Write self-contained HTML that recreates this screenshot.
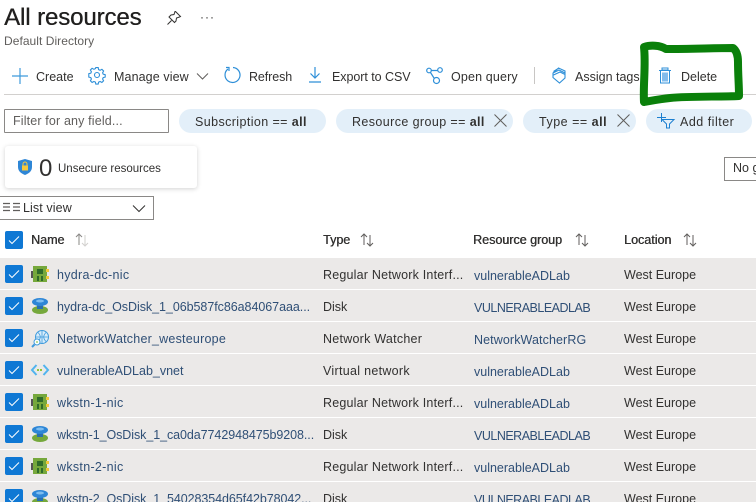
<!DOCTYPE html>
<html><head><meta charset="utf-8"><style>
html,body{margin:0;padding:0;background:#fff}
#p{position:relative;width:756px;height:502px;overflow:hidden;background:#fff;font-family:"Liberation Sans",sans-serif;font-size:12.5px;color:#323130}
.t{position:absolute;white-space:nowrap;line-height:16px}
.h{text-shadow:.4px 0 #323130}
.r{position:absolute;left:0;width:756px;height:31px;background:#ebe9e8}
.c{position:absolute;left:5px;width:18px;height:18px;background:#0f78d4;border-radius:2px}
.c svg{position:absolute;left:0;top:0}
.l{color:#2f4f76}
.up{letter-spacing:-.5px}
.nic{letter-spacing:.2px}
.pill{position:absolute;height:24px;top:109px;background:#e3eff9;border-radius:12px}
svg.a{position:absolute;overflow:visible}
b{font-weight:700}
</style></head><body><div id="p">

<div class="t h" style="left:4px;top:4px;font-size:24px;line-height:28px;color:#201f1e;letter-spacing:-.1px">All resources</div>
<svg class="a" style="left:166px;top:10px" width="16" height="16" viewBox="0 0 16 16" fill="none" stroke="#323130" stroke-width="1"><path d="M9.500 1.500l5 5-1 .5-3 1-.5 3-1.500 1.500-5.500-5.500 2-2 3-.5 1-3zM5.500 10.500l-4 4"/></svg>
<div class="t" style="left:200px;top:9px;font-size:12px;color:#323130;letter-spacing:1px">···</div>
<div class="t" style="left:4px;top:33px;font-size:12px;color:#605e5c;letter-spacing:.05px">Default Directory</div>

<svg class="a" style="left:12px;top:68px" width="16" height="16" fill="none" stroke="#3f9bdc" stroke-width="1.200"><path d="M8 0v16M0 8h16"/></svg>
<div class="t" style="left:36px;top:69px">Create</div>
<svg class="a" style="left:89px;top:67px" width="16" height="16" viewBox="0 0 16 16" fill="none" stroke="#2e8fd8" stroke-width="1.100"><circle cx="8" cy="8" r="2.500"/><path d="M6.800.6h2.400l.4 2 1.500.7 1.800-1 1.700 1.700-1 1.800.6 1.400 2 .5v2.400l-2 .5-.6 1.400 1 1.800-1.700 1.700-1.800-1-1.500.6-.4 2H6.800l-.4-2-1.500-.6-1.800 1-1.700-1.700 1-1.800-.6-1.400-2-.5V6.700l2-.5.600-1.400-1-1.800 1.700-1.700 1.800 1 1.500-.7z"/></svg>
<div class="t" style="left:114px;top:69px;letter-spacing:.1px">Manage view</div>
<svg class="a" style="left:196px;top:73px" width="13" height="7" fill="none" stroke="#605e5c"><path d="M1 .5l5.500 5.500L12 .5"/></svg>
<svg class="a" style="left:224px;top:66px" width="18" height="18" viewBox="0 0 18 18" fill="none" stroke="#2e8fd8" stroke-width="1.200"><path d="M4 3a7.500 7.500 0 1 0 5-1.500M2 1.500h3V5"/></svg>
<div class="t" style="left:249px;top:69px;letter-spacing:-.1px">Refresh</div>
<svg class="a" style="left:308px;top:67px" width="14" height="16" fill="none" stroke="#2e8fd8" stroke-width="1.200"><path d="M7 0v11M2.500 6.500L7 11l4.500-4.500M1 15h12"/></svg>
<div class="t" style="left:332px;top:69px;letter-spacing:-.05px">Export to CSV</div>
<svg class="a" style="left:426px;top:67px" width="17" height="17" fill="none" stroke="#2e8fd8" stroke-width="1.200"><circle cx="3" cy="3.500" r="2.300"/><circle cx="14" cy="3" r="2.300"/><circle cx="10.500" cy="13.500" r="3"/><path d="M5.300 3.500h6.500M4.500 5.500l3.800 6"/></svg>
<div class="t" style="left:451px;top:69px;letter-spacing:.15px">Open query</div>
<div style="position:absolute;left:534px;top:67px;width:1px;height:17px;background:#c8c6c4"></div>
<svg class="a" style="left:552px;top:67px" width="15" height="17" fill="none" stroke="#2e8fd8" stroke-width="1.100"><path d="M1 6l5.500-5L13 4v7l-5.500 5L1 10.500zM1.500 4.500L7 1M1 6l6-3 6 3M1.500 8L8 5l5 2.500"/></svg>
<div class="t" style="left:575px;top:69px;width:65px;overflow:hidden">Assign tags</div>
<svg class="a" style="left:658px;top:67px" width="14" height="17"><path d="M4 1h6v2H4z M1 3.500h12" fill="none" stroke="#2e8fd8"/><rect x="2.500" y="3.500" width="9" height="12.500" fill="#fff" stroke="#2e8fd8"/><rect x="4" y="5.500" width="6" height="9" fill="#82bcec"/></svg>
<div class="t" style="left:681px;top:69px">Delete</div>
<div style="position:absolute;left:4px;top:94px;width:752px;height:1px;background:#d2d0ce"></div>

<div style="position:absolute;left:4px;top:109px;width:163px;height:22px;border:1px solid #8a8886;border-radius:1px"></div>
<div class="t" style="left:13px;top:113px;color:#605e5c;letter-spacing:.15px">Filter for any field...</div>
<div class="pill" style="left:179px;width:147px"></div>
<div class="t" style="left:195px;top:114px;letter-spacing:.4px">Subscription == <b>all</b></div>
<div class="pill" style="left:336px;width:177px"></div>
<div class="t" style="left:352px;top:114px;letter-spacing:.4px">Resource group == <b>all</b></div>
<svg class="a" style="left:494px;top:114px" width="13" height="13" stroke="#605e5c"><path d="M.5.500l12 12M12.500.500l-12 12"/></svg>
<div class="pill" style="left:523px;width:113px"></div>
<div class="t" style="left:539px;top:114px;letter-spacing:.5px">Type == <b>all</b></div>
<svg class="a" style="left:617px;top:114px" width="13" height="13" stroke="#605e5c"><path d="M.5.500l12 12M12.500.500l-12 12"/></svg>
<div class="pill" style="left:646px;width:106px"></div>
<svg class="a" style="left:657px;top:113px" width="18" height="16" fill="none" stroke="#1c7fd0"><path d="M0 4.500h9M4.500 0v9M5 6.500h12l-4.500 4.500v4h-3v-4z"/></svg>
<div class="t" style="left:680px;top:114px;letter-spacing:.5px">Add filter</div>

<div style="position:absolute;left:5px;top:146px;width:192px;height:42px;background:#fff;border-radius:3px;box-shadow:0 1px 5px rgba(0,0,0,.18)"></div>
<svg class="a" style="left:18px;top:159px" width="14" height="16"><path d="M7 0l7 2v6c0 4-3 6.500-7 8-4-1.500-7-4-7-8V2z" fill="#2e86d6"/><rect x="4" y="6.500" width="6" height="5" fill="#f5c83c"/><path d="M5 6.500V5a2 2 0 0 1 4 0v1.500" fill="none" stroke="#f5c83c"/></svg>
<div class="t" style="left:39px;top:157px;font-size:24px;line-height:24px">0</div>
<div class="t" style="left:58px;top:161px;font-size:11.500px">Unsecure resources</div>
<div style="position:absolute;left:724px;top:157px;width:40px;height:22px;border:1px solid #8a8886"></div>
<div class="t" style="left:733px;top:160px">No g</div>

<div style="position:absolute;left:-2px;top:196px;width:154px;height:22px;border:1px solid #8a8886"></div>
<svg class="a" style="left:3px;top:202px" width="17" height="10" stroke="#605e5c" stroke-width="1.300"><path d="M0 1.500h7M0 5h7M0 8.500h7M10 1.500h7M10 5h7M10 8.500h7"/></svg>
<div class="t" style="left:23px;top:200px;letter-spacing:.1px">List view</div>
<svg class="a" style="left:132px;top:205px" width="14" height="8" fill="none" stroke="#323130"><path d="M1 .5l6 6 6-6"/></svg>

<div class="c" style="top:231px"><svg width="18" height="18" fill="none" stroke="#fff"><path d="M4 9.500l3 3 7-7"/></svg></div>
<div class="t h" style="left:31px;top:232px">Name</div>
<svg class="a" style="left:74px;top:233px" width="16" height="13" fill="none" stroke="#8a8886"><path d="M5 12V1M2 4L5 1l3 3"/><path d="M11 2v11M8 10l3 3 3-3" stroke="#d2d0ce"/></svg>
<div class="t h" style="left:323px;top:232px">Type</div>
<svg class="a" style="left:359px;top:233px" width="16" height="13" fill="none" stroke="#605e5c"><path d="M5 12V1M2 4L5 1l3 3M11 2v11M8 10l3 3 3-3"/></svg>
<div class="t h" style="left:473px;top:232px">Resource group</div>
<svg class="a" style="left:574px;top:233px" width="16" height="13" fill="none" stroke="#605e5c"><path d="M5 12V1M2 4L5 1l3 3M11 2v11M8 10l3 3 3-3"/></svg>
<div class="t h" style="left:624px;top:232px">Location</div>
<svg class="a" style="left:682px;top:233px" width="16" height="13" fill="none" stroke="#605e5c"><path d="M5 12V1M2 4L5 1l3 3M11 2v11M8 10l3 3 3-3"/></svg>

<!-- row 1 -->
<div class="r" style="top:258px"></div>
<div class="c" style="top:265px"><svg width="18" height="18" fill="none" stroke="#fff"><path d="M4 9.500l3 3 7-7"/></svg></div>
<svg class="a" style="left:31px;top:266px" width="18" height="16"><rect x="0" y="5" width="3" height="7" fill="#555"/><rect x="2" y="0" width="14" height="16" fill="#76a83c"/><rect x="15" y="3" width="3" height="3" fill="#f2c83c"/><rect x="15" y="10" width="3" height="3" fill="#f2c83c"/><rect x="6" y="3" width="6" height="5" fill="#2f6b2a"/><rect x="6" y="10" width="2" height="5" fill="#2f6b2a"/><rect x="10" y="10" width="2" height="5" fill="#2f6b2a"/></svg>
<div class="t l" style="left:57px;top:267px;letter-spacing:.3px">hydra-dc-nic</div>
<div class="t nic" style="left:323px;top:267px">Regular Network Interf...</div>
<div class="t l" style="left:474px;top:268px">vulnerableADLab</div>
<div class="t" style="left:624px;top:267px">West Europe</div>

<!-- row 2 -->
<div class="r" style="top:290px"></div>
<div class="c" style="top:297px"><svg width="18" height="18" fill="none" stroke="#fff"><path d="M4 9.500l3 3 7-7"/></svg></div>
<svg class="a" style="left:32px;top:298px" width="16" height="16"><ellipse cx="8" cy="12" rx="8" ry="4" fill="#76a83c"/><rect x="5" y="5" width="6" height="6" fill="#2a6fb0"/><ellipse cx="8" cy="4" rx="8" ry="4" fill="#2e86d6"/><ellipse cx="8" cy="3" rx="4" ry="1.500" fill="#7dbdf0"/></svg>
<div class="t l" style="left:57px;top:299px;letter-spacing:-.05px">hydra-dc_OsDisk_1_06b587fc86a84067aaa...</div>
<div class="t" style="left:323px;top:299px">Disk</div>
<div class="t l up" style="left:474px;top:300px">VULNERABLEADLAB</div>
<div class="t" style="left:624px;top:299px">West Europe</div>

<!-- row 3 -->
<div class="r" style="top:322px"></div>
<div class="c" style="top:329px"><svg width="18" height="18" fill="none" stroke="#fff"><path d="M4 9.500l3 3 7-7"/></svg></div>
<svg class="a" style="left:31px;top:330px" width="18" height="18" fill="none"><circle cx="11" cy="7" r="6.500" fill="#d8ecfb" stroke="#3f9bdc"/><path d="M4.500 7h13M11 .5v13M7 2.500c3 3 3 6 0 9M15 2.500c-3 3-3 6 0 9" stroke="#3f9bdc" stroke-width=".8"/><circle cx="6" cy="12" r="3" fill="#fff" stroke="#3f9bdc"/><path d="M3.500 14.500L1 17" stroke="#3f9bdc" stroke-width="2"/><path d="M5 12h2" stroke="#76b82a"/></svg>
<div class="t l" style="left:57px;top:331px;letter-spacing:.22px">NetworkWatcher_westeurope</div>
<div class="t" style="left:323px;top:331px;letter-spacing:.25px">Network Watcher</div>
<div class="t l" style="left:474px;top:332px;letter-spacing:.1px">NetworkWatcherRG</div>
<div class="t" style="left:624px;top:331px">West Europe</div>

<!-- row 4 -->
<div class="r" style="top:354px"></div>
<div class="c" style="top:361px"><svg width="18" height="18" fill="none" stroke="#fff"><path d="M4 9.500l3 3 7-7"/></svg></div>
<svg class="a" style="left:31px;top:364px" width="18" height="12" fill="none"><path d="M5.500 1L1 6l4.500 5M12.500 1L17 6l-4.500 5" stroke="#50b4ee" stroke-width="2"/><path d="M6 6h6" stroke="#8cc83c" stroke-width="2" stroke-dasharray="2 1"/></svg>
<div class="t l" style="left:57px;top:363px">vulnerableADLab_vnet</div>
<div class="t" style="left:323px;top:363px;letter-spacing:.3px">Virtual network</div>
<div class="t l" style="left:474px;top:364px">vulnerableADLab</div>
<div class="t" style="left:624px;top:363px">West Europe</div>

<!-- row 5 -->
<div class="r" style="top:386px"></div>
<div class="c" style="top:393px"><svg width="18" height="18" fill="none" stroke="#fff"><path d="M4 9.500l3 3 7-7"/></svg></div>
<svg class="a" style="left:31px;top:394px" width="18" height="16"><rect x="0" y="5" width="3" height="7" fill="#555"/><rect x="2" y="0" width="14" height="16" fill="#76a83c"/><rect x="15" y="3" width="3" height="3" fill="#f2c83c"/><rect x="15" y="10" width="3" height="3" fill="#f2c83c"/><rect x="6" y="3" width="6" height="5" fill="#2f6b2a"/><rect x="6" y="10" width="2" height="5" fill="#2f6b2a"/><rect x="10" y="10" width="2" height="5" fill="#2f6b2a"/></svg>
<div class="t l" style="left:57px;top:395px;letter-spacing:.3px">wkstn-1-nic</div>
<div class="t nic" style="left:323px;top:395px">Regular Network Interf...</div>
<div class="t l" style="left:474px;top:396px">vulnerableADLab</div>
<div class="t" style="left:624px;top:395px">West Europe</div>

<!-- row 6 -->
<div class="r" style="top:418px"></div>
<div class="c" style="top:425px"><svg width="18" height="18" fill="none" stroke="#fff"><path d="M4 9.500l3 3 7-7"/></svg></div>
<svg class="a" style="left:32px;top:426px" width="16" height="16"><ellipse cx="8" cy="12" rx="8" ry="4" fill="#76a83c"/><rect x="5" y="5" width="6" height="6" fill="#2a6fb0"/><ellipse cx="8" cy="4" rx="8" ry="4" fill="#2e86d6"/><ellipse cx="8" cy="3" rx="4" ry="1.500" fill="#7dbdf0"/></svg>
<div class="t l" style="left:57px;top:427px;letter-spacing:-.07px">wkstn-1_OsDisk_1_ca0da7742948475b9208...</div>
<div class="t" style="left:323px;top:427px">Disk</div>
<div class="t l up" style="left:474px;top:428px">VULNERABLEADLAB</div>
<div class="t" style="left:624px;top:427px">West Europe</div>

<!-- row 7 -->
<div class="r" style="top:450px"></div>
<div class="c" style="top:457px"><svg width="18" height="18" fill="none" stroke="#fff"><path d="M4 9.500l3 3 7-7"/></svg></div>
<svg class="a" style="left:31px;top:458px" width="18" height="16"><rect x="0" y="5" width="3" height="7" fill="#555"/><rect x="2" y="0" width="14" height="16" fill="#76a83c"/><rect x="15" y="3" width="3" height="3" fill="#f2c83c"/><rect x="15" y="10" width="3" height="3" fill="#f2c83c"/><rect x="6" y="3" width="6" height="5" fill="#2f6b2a"/><rect x="6" y="10" width="2" height="5" fill="#2f6b2a"/><rect x="10" y="10" width="2" height="5" fill="#2f6b2a"/></svg>
<div class="t l" style="left:57px;top:459px;letter-spacing:.3px">wkstn-2-nic</div>
<div class="t nic" style="left:323px;top:459px">Regular Network Interf...</div>
<div class="t l" style="left:474px;top:460px">vulnerableADLab</div>
<div class="t" style="left:624px;top:459px">West Europe</div>

<!-- row 8 -->
<div class="r" style="top:482px"></div>
<div class="c" style="top:489px"><svg width="18" height="18" fill="none" stroke="#fff"><path d="M4 9.500l3 3 7-7"/></svg></div>
<svg class="a" style="left:32px;top:490px" width="16" height="16"><ellipse cx="8" cy="12" rx="8" ry="4" fill="#76a83c"/><rect x="5" y="5" width="6" height="6" fill="#2a6fb0"/><ellipse cx="8" cy="4" rx="8" ry="4" fill="#2e86d6"/><ellipse cx="8" cy="3" rx="4" ry="1.500" fill="#7dbdf0"/></svg>
<div class="t l" style="left:57px;top:491px;letter-spacing:-.07px">wkstn-2_OsDisk_1_54028354d65f42b78042...</div>
<div class="t" style="left:323px;top:491px">Disk</div>
<div class="t l up" style="left:474px;top:492px">VULNERABLEADLAB</div>
<div class="t" style="left:624px;top:491px">West Europe</div>

<svg class="a" style="left:0;top:0" width="756" height="502" fill="none" stroke="#0a800a" stroke-width="8" stroke-linecap="round" stroke-linejoin="round"><path d="M644 47C650 45 660 45 666 49C690 49 715 48 733 48C737 51 738 56 738 62C738 75 739 85 739 96C720 97 690 96 670 98C660 99 650 101 644 102C643 85 646 65 644 47Z"/></svg>
</div></body></html>
